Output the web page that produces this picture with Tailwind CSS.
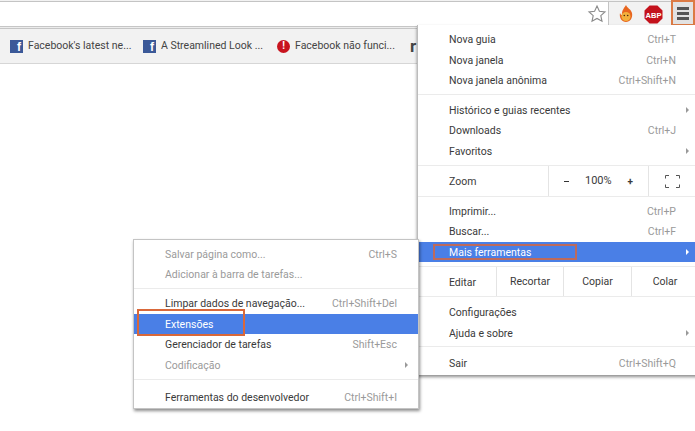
<!DOCTYPE html>
<html lang="en">
  <head>
    <meta charset="UTF-8" />
    <title>Menu</title>
    <script src="https://cdn.jsdelivr.net/npm/@tailwindcss/browser@4"></script>
  </head>
  <body class="relative w-[695px] h-[431px] overflow-hidden bg-white font-['Roboto',sans-serif] text-[10.5px] text-[#3a3a3a]">
    <!-- Toolbar -->
    <div class="flex h-[26px] bg-[#f2f2f2]">
      <div class="flex-1 flex items-center justify-end pr-px bg-white mt-px border-t border-r border-[#c4c4c4]">
        <svg class="w-[20px] h-[20px] text-[#8a8a8a]" viewBox="0 0 20 20" fill="none" stroke="currentColor" stroke-width="1.1">
          <path d="M10 2l2.400 5.300 5.600.6-4.200 3.800 1.200 5.600L10 14.500l-5 2.800 1.200-5.600L2 7.900l5.600-.6z"></path>
        </svg>
      </div>
      <div class="w-[62px] flex items-center pl-[8px] gap-[9px] mt-px border-t border-[#c4c4c4]">
        <svg class="w-[18px] h-[20px]" viewBox="0 0 18 20">
          <path d="M9 1c1 3 5 4 6 8 1 5-2 9-6 9s-7-4-6-9c.5 1 1 2 2 2C4.500 7 7 4 9 1z" fill="#e8661f"></path>
          <ellipse cx="9" cy="12.500" rx="4.500" ry="4.500" fill="#f2b03c"></ellipse>
          <circle cx="7.300" cy="11.500" r=".8" fill="#4a2a10"></circle>
          <circle cx="10.700" cy="11.500" r=".8" fill="#4a2a10"></circle>
        </svg>
        <svg class="w-[19px] h-[19px]" viewBox="0 0 19 19">
          <path d="M5.600 .5h7.800l5.100 5.100v7.800l-5.100 5.100H5.600L.5 13.400V5.600z" fill="#c4121c"></path>
          <text x="9.500" y="12.500" text-anchor="middle" font-size="7.500" font-weight="700" fill="#fff" font-family="Liberation Sans, sans-serif">ABP</text>
        </svg>
      </div>
      <div class="w-[24px] flex flex-col items-center justify-center gap-[2px] border-[2.500px] border-[#dc7a44] bg-[#e2e2e2]">
        <div class="w-[12px] h-[3px] bg-[#555]"></div>
        <div class="w-[12px] h-[3px] bg-[#555]"></div>
        <div class="w-[12px] h-[3px] bg-[#555]"></div>
      </div>
    </div>
    <div class="h-[3px] border-y border-[#c6c6c6] bg-[#ececec]"></div>

    <!-- Bookmarks bar -->
    <div class="flex items-center h-[35px] bg-[#f2f2f2] border-b border-[#d6d6d6] pl-[10px] text-[#444] whitespace-nowrap">
      <div class="flex items-center gap-[5px] w-[133px]">
        <div class="w-[13px] h-[13px] bg-[#3b5998] flex items-end justify-end pr-[2px] text-white font-bold text-[12px] leading-[12px] font-['Liberation_Sans',sans-serif]">f</div>
        <span>Facebook's latest ne...</span>
      </div>
      <div class="flex items-center gap-[5px] w-[134px]">
        <div class="w-[13px] h-[13px] bg-[#3b5998] flex items-end justify-end pr-[2px] text-white font-bold text-[12px] leading-[12px] font-['Liberation_Sans',sans-serif]">f</div>
        <span>A Streamlined Look ...</span>
      </div>
      <div class="flex items-center gap-[5px] w-[133px]">
        <div class="w-[13px] h-[13px] rounded-full bg-[#c8141e] flex items-center justify-center text-white font-bold text-[10px] leading-none">!</div>
        <span>Facebook não funci...</span>
      </div>
      <span class="text-[17px] font-bold text-[#444] leading-none">r</span>
    </div>

    <!-- Main menu -->
    <div class="absolute left-[417px] top-[25px] w-[290px] pt-[4px] pb-[1.5px] bg-white border-l border-[#bcbcbc] shadow-[0_2px_3px_rgba(0,0,0,0.45)]">
      <div class="flex items-center justify-between h-[20.5px] pt-[2px] pl-[31px] pr-[31px]"><span>Nova guia</span><span class="text-[#9a9a9a]">Ctrl+T</span></div>
      <div class="flex items-center justify-between h-[20.5px] pt-[2px] pl-[31px] pr-[31px]"><span>Nova janela</span><span class="text-[#9a9a9a]">Ctrl+N</span></div>
      <div class="flex items-center justify-between h-[20.5px] pt-[2px] pl-[31px] pr-[31px]"><span>Nova janela anônima</span><span class="text-[#9a9a9a]">Ctrl+Shift+N</span></div>
      <div class="mt-[3px] mb-[5px] h-px bg-[#ebebeb]"></div>
      <div class="relative flex items-center justify-between h-[20.5px] pt-[2px] pl-[31px] pr-[31px]"><span>Histórico e guias recentes</span><span class="absolute left-[268px] top-[7px] border-y-[3.500px] border-l-[3.500px] border-y-transparent border-l-[#999]"></span></div>
      <div class="flex items-center justify-between h-[20.5px] pt-[2px] pl-[31px] pr-[31px]"><span>Downloads</span><span class="text-[#9a9a9a]">Ctrl+J</span></div>
      <div class="relative flex items-center justify-between h-[20.5px] pt-[2px] pl-[31px] pr-[31px]"><span>Favoritos</span><span class="absolute left-[268px] top-[7px] border-y-[3.500px] border-l-[3.500px] border-y-transparent border-l-[#999]"></span></div>
      <!-- Zoom row -->
      <div class="flex mt-[4px] h-[32px] border-y border-[#ebebeb]">
        <div class="w-[131px] pl-[31px] pt-[2px] flex items-center border-r border-[#e4e4e4]">Zoom</div>
        <div class="w-[100px] flex items-center border-r border-[#e4e4e4] pl-[15px]">
          <span class="w-[5px] h-px bg-[#333]"></span>
          <span class="ml-[16px] text-[11px]">100%</span>
          <span class="ml-[16px] font-bold text-[10px]">+</span>
        </div>
        <div class="pl-[16px] flex items-center">
          <svg class="w-[15px] h-[13px] text-[#555]" viewBox="0 0 15 13" fill="none" stroke="currentColor">
            <path d="M.5 3.500V.5H4M11 .5h3.500v3M14.500 9.500v3H11M4 12.500H.5v-3"></path>
          </svg>
        </div>
      </div>
      <div class="flex items-center justify-between h-[20.5px] pt-[2px] mt-[3.5px] pl-[31px] pr-[31px]"><span>Imprimir...</span><span class="text-[#9a9a9a]">Ctrl+P</span></div>
      <div class="flex items-center justify-between h-[20.5px] pt-[2px] pl-[31px] pr-[31px]"><span>Buscar...</span><span class="text-[#9a9a9a]">Ctrl+F</span></div>
      <div class="relative flex items-center justify-between h-[20.5px] pt-[2px] pl-[31px] pr-[31px] bg-[#4a7fe6] text-white"><span>Mais ferramentas</span><span class="absolute left-[268px] top-[7px] border-y-[3.500px] border-l-[3.500px] border-y-transparent border-l-white"></span></div>
      <!-- Edit row -->
      <div class="flex mt-[4px] h-[31px] border-y border-[#ebebeb]">
        <div class="w-[79px] pl-[31px] pt-[3px] flex items-center border-r border-[#e4e4e4]">Editar</div>
        <div class="w-[67px] pt-px flex items-center justify-center border-r border-[#e4e4e4]">Recortar</div>
        <div class="w-[68px] pt-px flex items-center justify-center border-r border-[#e4e4e4]">Copiar</div>
        <div class="w-[66px] pt-px flex items-center justify-center">Colar</div>
      </div>
      <div class="flex items-center justify-between h-[20.5px] pt-[2px] mt-[5px] pl-[31px] pr-[31px]"><span>Configurações</span></div>
      <div class="relative flex items-center justify-between h-[20.5px] pt-[2px] pl-[31px] pr-[31px]"><span>Ajuda e sobre</span><span class="absolute left-[268px] top-[7px] border-y-[3.500px] border-l-[3.500px] border-y-transparent border-l-[#999]"></span></div>
      <div class="mt-[3px] mb-[6px] h-px bg-[#ebebeb]"></div>
      <div class="flex items-center justify-between h-[20.5px] pt-[2px] pl-[31px] pr-[31px]"><span>Sair</span><span class="text-[#9a9a9a]">Ctrl+Shift+Q</span></div>
    </div>
    <!-- highlight around Mais ferramentas -->
    <div class="absolute left-[433px] top-[244px] w-[144px] h-[16px] border-2 border-[#bd6a5c]"></div>

    <!-- Submenu -->
    <div class="absolute left-[133px] top-[239px] w-[286px] pt-[3.5px] pb-px bg-white border border-[#c4c4c4] shadow-[1px_2px_3px_rgba(0,0,0,0.45)]">
      <div class="flex items-center justify-between h-[20.5px] pt-[2px] pl-[31px] pr-[21px] text-[#9a9a9a]"><span>Salvar página como...</span><span>Ctrl+S</span></div>
      <div class="flex items-center h-[20.5px] pt-[2px] pl-[31px] text-[#9a9a9a]"><span>Adicionar à barra de tarefas...</span></div>
      <div class="mt-[3.5px] mb-[4px] h-px bg-[#ebebeb]"></div>
      <div class="flex items-center justify-between h-[20.5px] pt-[2px] pl-[31px] pr-[21px]"><span>Limpar dados de navegação...</span><span class="text-[#9a9a9a]">Ctrl+Shift+Del</span></div>
      <div class="flex items-center h-[20.5px] pt-[2px] pl-[31px] bg-[#4a7fe6] text-white"><span>Extensões</span></div>
      <div class="flex items-center justify-between h-[20.5px] pt-[2px] pl-[31px] pr-[21px]"><span>Gerenciador de tarefas</span><span class="text-[#9a9a9a]">Shift+Esc</span></div>
      <div class="relative flex items-center h-[20.5px] pt-[2px] pl-[31px] text-[#9a9a9a]"><span>Codificação</span><span class="absolute left-[271px] top-[7px] border-y-[3.500px] border-l-[3.500px] border-y-transparent border-l-[#999]"></span></div>
      <div class="mt-[4px] mb-[6.5px] h-px bg-[#ebebeb]"></div>
      <div class="flex items-center justify-between h-[20.5px] pt-[2px] pl-[31px] pr-[21px]"><span>Ferramentas do desenvolvedor</span><span class="text-[#9a9a9a]">Ctrl+Shift+I</span></div>
    </div>
    <!-- highlight around Extensoes -->
    <div class="absolute left-[137px] top-[309px] w-[108px] h-[27px] border-2 border-[#d9683a]"></div>
  </body>
</html>
